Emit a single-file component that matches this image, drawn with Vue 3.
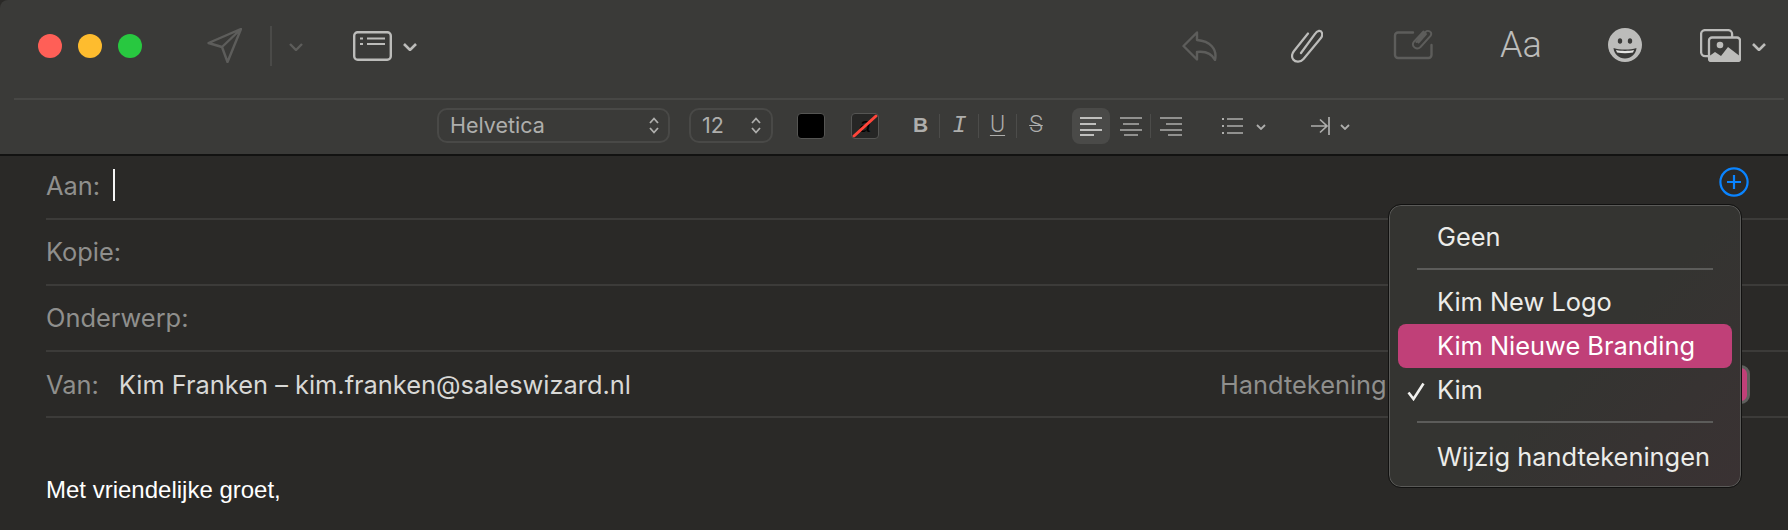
<script setup>
const headerRows = [
  { label: 'Aan:', caret: true, add: true },
  { label: 'Kopie:' },
  { label: 'Onderwerp:' },
]

const signatures = [
  { name: 'Geen' },
  { divider: true },
  { name: 'Kim New Logo' },
  { name: 'Kim Nieuwe Branding', active: true },
  { name: 'Kim', checked: true },
  { divider: true },
  { name: 'Wijzig handtekeningen' },
]
</script>

<template>
  <div class="window">
    <div class="toolbar">
      <div class="top-row">
        <span class="light red"></span>
        <span class="light yellow"></span>
        <span class="light green"></span>

        <svg class="send" width="35" height="35" viewBox="0 0 35 35" fill="none" stroke="#5d5d5b" stroke-width="2.4" stroke-linejoin="round">
          <path d="M34 1 L1.5 15 L15 19 L20.5 34 Z M34 1 L15 19" />
        </svg>
        <span class="top-sep"></span>
        <svg class="chev chev-send" width="14" height="8" viewBox="0 0 14 8" fill="none" stroke="#5d5d5b" stroke-width="2.4">
          <path d="M1 1 L7 7 L13 1" />
        </svg>

        <svg class="headers" width="39" height="30" viewBox="0 0 39 30" fill="none" stroke="#bcbcba" stroke-width="2.4">
          <rect x="1.2" y="1.2" width="36.6" height="27.6" rx="3.5" />
          <path d="M7 7.5 H10 M14 7.5 H32 M7 13 H10 M14 13 H32" stroke-width="2" />
        </svg>
        <svg class="chev chev-headers" width="14" height="8" viewBox="0 0 14 8" fill="none" stroke="#bcbcba" stroke-width="2.6">
          <path d="M1 1 L7 7 L13 1" />
        </svg>

        <svg class="reply" width="35" height="30" viewBox="0 0 35 30" fill="none" stroke="#5d5d5b" stroke-width="2.4" stroke-linejoin="round">
          <path d="M15 1.5 L1.5 15 L15 28.5 L15 21 C24 20 30 23 33 29 C35.5 18 28 10 15 9 Z" />
        </svg>
        <svg class="clip" width="32" height="35" viewBox="0 0 32 35" fill="none" stroke="#bcbcba" stroke-width="2.2" stroke-linecap="round">
          <path d="M10 25 L24 6 C26 2.5 30 1.5 31 5 C31.6 7 30.8 9 29.5 10.5 L12.5 31 C9.5 34.5 4.5 34.5 2.2 31.5 C0.2 28.5 1 25.5 3 23 L17 5.5" />
        </svg>
        <svg class="sign" width="40" height="32" viewBox="0 0 40 32" fill="none" stroke="#5d5d5b" stroke-width="2.4" stroke-linecap="round">
          <path d="M20 3.5 H5 A3 3 0 0 0 2 6.5 V26 A3 3 0 0 0 5 29 H35.5 A3 3 0 0 0 38.5 26 V16" />
          <path d="M23.5 13 L32.5 3 C35 0.5 40 3 37.5 7 L27.5 18 C24 21.5 17.5 17.5 21 12.5 L30.5 2.5 M25.5 13.5 L33 5" stroke-width="1.9" />
        </svg>
        <span class="font-btn">Aa</span>
        <svg class="emoji" width="34" height="34" viewBox="0 0 34 34">
          <circle cx="17" cy="17" r="17" fill="#bcbcba" />
          <ellipse cx="12" cy="13" rx="2.2" ry="2.7" fill="#3a3a38" />
          <ellipse cx="22" cy="13" rx="2.2" ry="2.7" fill="#3a3a38" />
          <path d="M5.5 20 C12 22 22 22 28.5 20 C28 26 23 30.5 17 30.5 C11 30.5 6 26 5.5 20 Z" fill="#3a3a38" />
          <path d="M8 22 C13 23.2 21 23.2 26 22 L25 24.6 C20 25.6 14 25.6 9 24.6 Z" fill="#e4e4e2" />
        </svg>
        <svg class="photos" width="41" height="33" viewBox="0 0 41 33" fill="none" stroke="#bcbcba" stroke-width="2.3">
          <rect x="1.1" y="1.1" width="31" height="26" rx="4" />
          <rect x="9" y="8.5" width="31" height="23.5" rx="3" fill="#3a3a38" />
          <path d="M8 30 V28 L15 23 L21 27 L28 18 L41 28 V30 A3 3 0 0 1 38 33 H11 A3 3 0 0 1 8 30 Z" fill="#bcbcba" stroke="none" />
          <circle cx="20" cy="16" r="3.3" fill="#bcbcba" stroke="none" />
        </svg>
        <svg class="chev chev-photos" width="14" height="8" viewBox="0 0 14 8" fill="none" stroke="#bcbcba" stroke-width="2.6">
          <path d="M1 1 L7 7 L13 1" />
        </svg>
      </div>

      <div class="toolbar-line"></div>

      <div class="format-row">
        <div class="select font-select">
          <span>Helvetica</span>
          <svg width="10" height="17" viewBox="0 0 10 17" fill="none" stroke="#aeaeac" stroke-width="1.8">
            <path d="M1 6 L5 1.5 L9 6 M1 11 L5 15.5 L9 11" />
          </svg>
        </div>
        <div class="select size-select">
          <span>12</span>
          <svg width="10" height="17" viewBox="0 0 10 17" fill="none" stroke="#aeaeac" stroke-width="1.8">
            <path d="M1 6 L5 1.5 L9 6 M1 11 L5 15.5 L9 11" />
          </svg>
        </div>
        <span class="well well-text"></span>
        <span class="well well-bg">
          <span class="well-a">a</span>
          <svg width="26" height="24" viewBox="0 0 26 24">
            <path d="M2 22 L24 2" stroke="#ff453a" stroke-width="3" stroke-linecap="round" />
          </svg>
        </span>

        <div class="style-group">
          <span class="style-cell bold">B</span>
          <span class="style-cell italic">I</span>
          <span class="style-cell under">U</span>
          <span class="style-cell strike">S</span>
        </div>

        <div class="align-group">
          <span class="align-cell active">
            <svg width="22" height="20" viewBox="0 0 22 20" stroke="#e6e6e4" stroke-width="1.7">
              <path d="M0 2 H22 M0 8 H16 M0 14 H22 M0 19 H14" />
            </svg>
          </span>
          <span class="align-cell">
            <svg width="22" height="20" viewBox="0 0 22 20" stroke="#aeaeac" stroke-width="1.7">
              <path d="M0 2 H22 M3 8 H19 M0 14 H22 M4 19 H18" />
            </svg>
          </span>
          <span class="align-cell">
            <svg width="22" height="20" viewBox="0 0 22 20" stroke="#aeaeac" stroke-width="1.7">
              <path d="M0 2 H22 M6 8 H22 M0 14 H22 M8 19 H22" />
            </svg>
          </span>
        </div>

        <svg class="list-icon" width="21" height="18" viewBox="0 0 21 18" fill="none" stroke="#aeaeac" stroke-width="1.7">
          <path d="M5 2 H21 M5 9 H21 M5 16 H21" />
          <path d="M0 2 H2 M0 9 H2 M0 16 H2" stroke-width="2.2" />
        </svg>
        <svg class="mini-chev list-chev" width="10" height="6" viewBox="0 0 10 6" fill="none" stroke="#aeaeac" stroke-width="1.8">
          <path d="M1 1 L5 5 L9 1" />
        </svg>
        <svg class="indent-icon" width="19" height="18" viewBox="0 0 19 18" fill="none" stroke="#aeaeac" stroke-width="1.7">
          <path d="M0 9 H16 M9 2.5 L16 9 L9 15.5 M18 0 V18" />
        </svg>
        <svg class="mini-chev indent-chev" width="10" height="6" viewBox="0 0 10 6" fill="none" stroke="#aeaeac" stroke-width="1.8">
          <path d="M1 1 L5 5 L9 1" />
        </svg>
      </div>
    </div>

    <div class="compose">
      <div v-for="row in headerRows" :key="row.label" class="field" :class="{ first: row.caret }">
        <span class="label">{{ row.label }}</span>
        <span v-if="row.caret" class="caret"></span>
        <svg v-if="row.add" class="add" width="30" height="30" viewBox="0 0 30 30" fill="none" stroke="#0a84ff" stroke-width="2.2">
          <circle cx="15" cy="15" r="13.6" />
          <path d="M15 8 V22 M8 15 H22" />
        </svg>
      </div>

      <div class="field from">
        <span class="label">Van:</span>
        <span class="sender">Kim Franken – kim.franken@saleswizard.nl</span>
        <span class="label sig-label">Handtekening:</span>
        <span class="sig-button"></span>
      </div>

      <p class="message">Met vriendelijke groet,</p>
    </div>

    <div class="menu">
      <template v-for="(item, i) in signatures" :key="i">
        <div v-if="item.divider" class="menu-sep"></div>
        <div v-else class="menu-item" :class="{ active: item.active }">
          <svg v-if="item.checked" class="check" width="18" height="19" viewBox="0 0 18 19" fill="none" stroke="#f0f0ee" stroke-width="2.6">
            <path d="M1.5 10.5 L6.5 17 L16.5 1.5" />
          </svg>
          {{ item.name }}
        </div>
      </template>
    </div>
  </div>
</template>

<style>
html,
body {
  margin: 0;
  background: #2a2927;
}
</style>

<style scoped>
* {
  box-sizing: border-box;
}

.window {
  position: relative;
  width: 1788px;
  height: 530px;
  overflow: hidden;
  background: #2a2927;
  font-family: Inter, Roboto, "Liberation Sans", sans-serif;
}

.toolbar {
  height: 156px;
  background: #3a3a38;
  border-bottom: 2px solid #121211;
  border-top-left-radius: 8px;
}

.top-row {
  display: flex;
  align-items: center;
  height: 98px;
  padding: 0 0 6px 38px;
}

.light {
  width: 24px;
  height: 24px;
  border-radius: 50%;
  margin-right: 16px;
}

.red { background: #ff5f57; }
.yellow { background: #febc2e; }
.green { background: #28c840; }

.send { margin-left: 49px; margin-top: -1px; flex: none; }
.top-sep { width: 2px; height: 40px; background: #4a4a48; margin-left: 28px; }
.chev { flex: none; }
.chev-send { margin-left: 17px; margin-top: 2px; }
.headers { margin-left: 50px; flex: none; }
.chev-headers { margin-left: 11px; margin-top: 2px; }
.reply { margin-left: 765px; flex: none; }
.clip { margin-left: 74px; margin-top: -1px; flex: none; }
.sign { margin-left: 70px; margin-top: -3px; flex: none; }

.font-btn {
  width: 39px;
  margin-left: 67px;
  margin-top: -2px;
  font-family: Roboto, sans-serif;
  font-size: 36px;
  font-weight: 300;
  line-height: 34px;
  color: #bcbcba;
  white-space: nowrap;
}

.emoji { margin-left: 69px; margin-top: -2px; flex: none; }
.photos { margin-left: 58px; margin-top: -2px; flex: none; }
.chev-photos { margin-left: 11px; margin-top: 2px; }

.toolbar-line {
  height: 2px;
  margin: 0 4px 0 14px;
  background: #474745;
}

.format-row {
  display: flex;
  align-items: center;
  height: 54px;
  padding: 0 0 3px 437px;
  color: #aeaeac;
}

.select {
  display: flex;
  align-items: center;
  justify-content: space-between;
  height: 35px;
  padding-bottom: 2px;
  border: 2px solid #494947;
  border-radius: 10px;
  font-size: 21.5px;
}

.select svg { margin-top: 2px; }

.font-select { width: 233px; padding-left: 11px; padding-right: 9px; }
.size-select { width: 84px; padding-left: 11px; padding-right: 10px; margin-left: 19px; }

.well {
  position: relative;
  width: 28px;
  height: 26px;
  border: 1px solid #555553;
  border-radius: 4px;
  overflow: hidden;
  flex: none;
}

.well-text { margin-left: 24px; background: #000; }
.well-bg { margin-left: 26px; background: #262625; }

.well-bg svg {
  position: absolute;
  left: 0;
  top: 0;
}

.well-a {
  display: block;
  font-family: "Liberation Sans", sans-serif;
  font-style: italic;
  font-size: 20px;
  line-height: 22px;
  text-align: center;
  color: #000;
}

.style-group {
  display: flex;
  margin-left: 24px;
}

.style-cell {
  width: 38px;
  height: 24px;
  border-right: 1px solid #4c4c4a;
  text-align: center;
  font-family: Roboto, sans-serif;
  font-size: 23px;
  font-weight: 300;
  line-height: 22px;
}

.style-cell:last-child { border-right: 0; }
.bold { font-family: "Liberation Sans", sans-serif; font-size: 21px; font-weight: 700; margin-left: -1px; margin-right: 1px; }
.italic { font-family: "Liberation Mono", monospace; font-style: italic; font-weight: 400; font-size: 24px; line-height: 24px; }
.under { text-decoration: underline; text-decoration-thickness: 1px; text-underline-offset: 3px; }
.strike { text-decoration: line-through; text-decoration-thickness: 1px; }

.align-group {
  display: flex;
  gap: 2px;
  margin-left: 17px;
}

.align-cell {
  display: flex;
  align-items: center;
  justify-content: center;
  position: relative;
  width: 38px;
  height: 36px;
  border-radius: 8px;
}

.align-cell.active { background: #4a4a48; }

.align-cell:nth-child(2)::after {
  content: "";
  position: absolute;
  right: -1px;
  top: 6px;
  width: 1px;
  height: 24px;
  background: #4c4c4a;
}

.list-icon { margin-left: 32px; flex: none; }
.mini-chev { flex: none; }
.list-chev { margin-left: 13px; margin-top: 2px; }
.indent-icon { margin-left: 45px; flex: none; }
.indent-chev { margin-left: 10px; margin-top: 2px; }

.compose {
  display: flex;
  flex-direction: column;
}

.field {
  display: flex;
  align-items: center;
  height: 66px;
  margin-left: 46px;
  padding-bottom: 2px;
  border-bottom: 2px solid #3c3b39;
  font-size: 25.4px;
}

.field.first { height: 64px; padding-bottom: 4px; }
.field.from { padding-bottom: 0; }

.label { color: #8f8f8d; }

.caret {
  width: 2px;
  height: 32px;
  margin-left: 13px;
  background: #f4f4f4;
}

.add {
  margin-left: auto;
  margin-right: 39px;
  margin-bottom: 6px;
}

.sender {
  margin-left: 20px;
  color: #d8d8d6;
}

.sig-label {
  margin-left: auto;
  white-space: nowrap;
}

.sig-button {
  width: 355px;
  height: 39px;
  margin-left: 1px;
  margin-right: 38px;
  border: 3px solid #5f5f5d;
  border-radius: 9px;
  background: #c04078;
  flex: none;
}

.message {
  margin: 56px 0 0 46px;
  color: #fff;
  font-family: "Liberation Sans", sans-serif;
  font-size: 24px;
  line-height: 32px;
}

.menu {
  position: absolute;
  left: 1388px;
  top: 204px;
  width: 354px;
  height: 284px;
  padding: 10px 9px;
  border: 1px solid #111110;
  border-radius: 13px;
  background: linear-gradient(135deg, #343431 55%, #3a3233 100%);
  box-shadow: inset 0 0 0 1px #5a5a58;
}

.menu-item {
  position: relative;
  height: 44px;
  padding-left: 39px;
  border-radius: 8px;
  font-size: 25.4px;
  line-height: 44px;
  color: #ecece9;
  white-space: nowrap;
}

.menu-item:last-child { padding-top: 2px; }

.menu-item.active {
  background: #c04078;
  color: #fff;
}

.check {
  position: absolute;
  left: 9px;
  top: 14px;
}

.menu-sep {
  height: 2px;
  margin: 9px 19px 10px;
  background: #5c5c5a;
}
</style>
